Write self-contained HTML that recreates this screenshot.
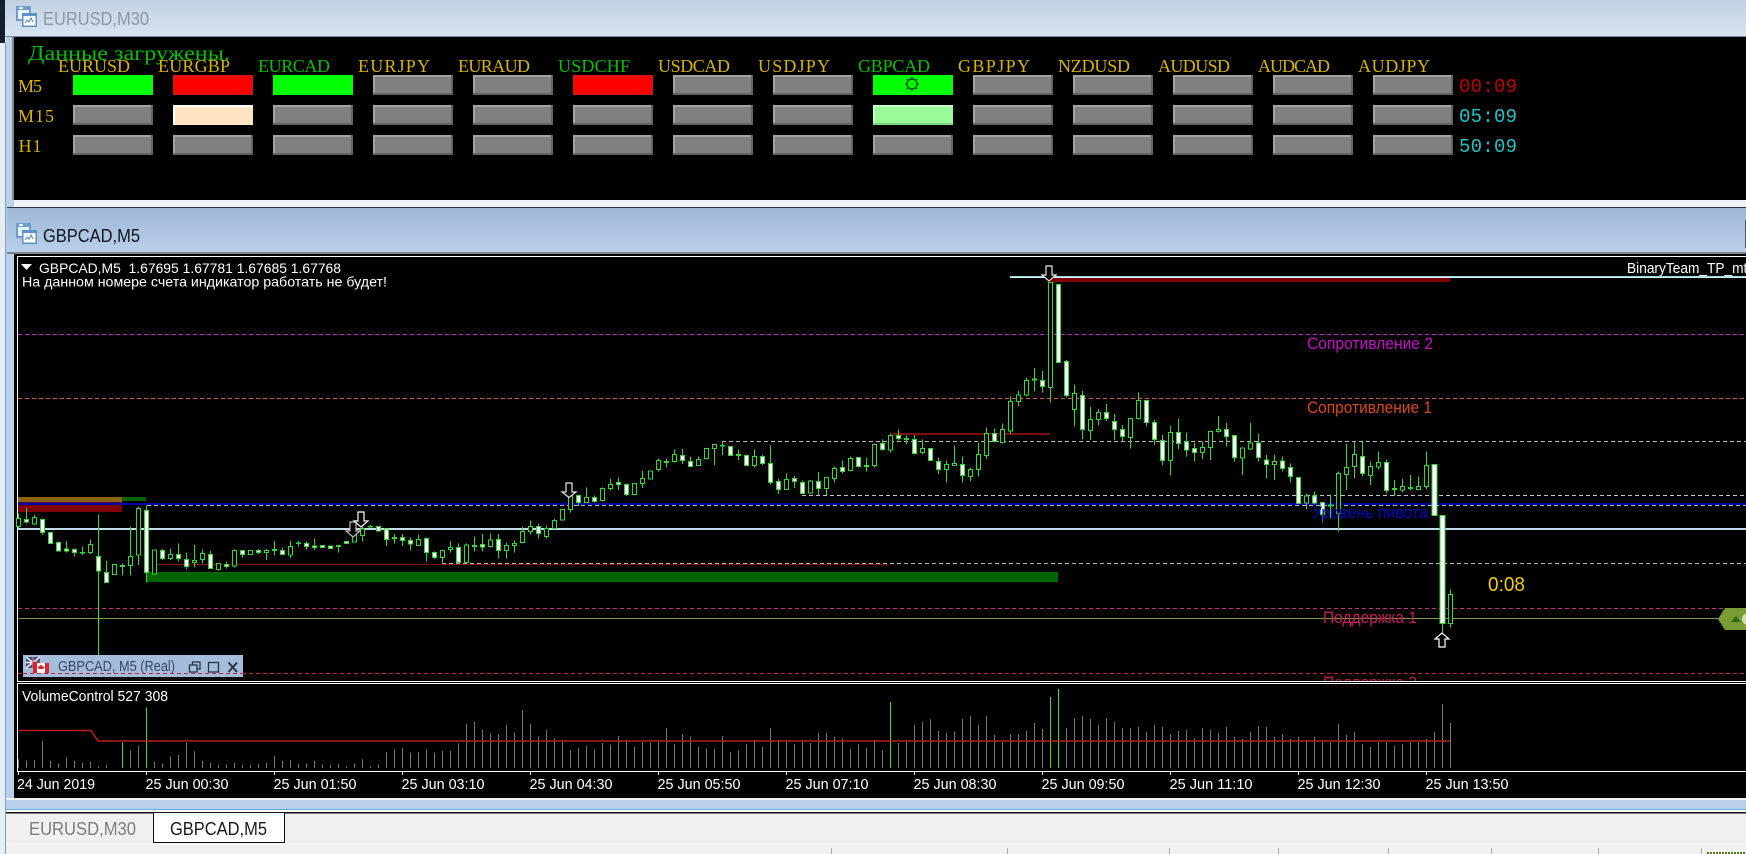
<!DOCTYPE html>
<html lang="ru"><head><meta charset="utf-8"><title>GBPCAD,M5</title>
<style>
html,body{margin:0;padding:0;width:1746px;height:854px;overflow:hidden;background:#f0f0f0}
svg{display:block}
.m{font-family:"Liberation Serif","Liberation Mono",serif;font-size:18px}
.s{font-family:"Liberation Sans",sans-serif}
.c{vector-effect:non-scaling-stroke}
</style></head><body>
<svg xmlns="http://www.w3.org/2000/svg" width="1746" height="854" viewBox="0 0 1746 854">
<defs>
<linearGradient id="t1" x1="0" y1="0" x2="0" y2="1"><stop offset="0" stop-color="#c1d0e0"/><stop offset="1" stop-color="#d6e4f1"/></linearGradient>
<linearGradient id="t2" x1="0" y1="0" x2="0" y2="1"><stop offset="0" stop-color="#9db7d6"/><stop offset="1" stop-color="#b9cfe9"/></linearGradient>
<g id="b" shape-rendering="crispEdges"><rect width="80" height="20" fill="#808080"/><rect width="80" height="2" fill="#a2a2a2"/><rect width="2" height="20" fill="#a2a2a2"/><rect y="18" width="80" height="2" fill="#626262"/><rect x="78" width="2" height="20" fill="#626262"/></g>
<g id="wi"><rect x="0" y="0" width="15" height="15" fill="#6d9ccb"/><rect x="2" y="4" width="11" height="9" fill="#eaf3fb"/><rect x="3" y="1" width="4" height="2" fill="#e8f2fb"/><rect x="6" y="7" width="15" height="14" fill="#5b93c9"/><rect x="7.500" y="10" width="12" height="9.500" fill="#fff"/><path d="M9 17l2-3 2 2 2-4 2 4" fill="none" stroke="#5a86b0" stroke-width="1"/></g>
</defs>

<!-- outer -->
<rect width="1746" height="854" fill="#f0f0f0"/>
<rect x="0" y="43" width="5" height="811" fill="#e6edf3"/>
<rect x="0" y="0" width="5" height="43" fill="#12202e"/>
<rect x="5" y="43" width="1" height="811" fill="#7d9fc4"/>
<rect x="6" y="0" width="10" height="812" fill="#bad1ea"/>
<rect x="5" y="0" width="1741" height="36" fill="url(#t1)"/>
<rect x="5" y="36" width="1741" height="1" fill="#7e8994"/>

<!-- top panel -->
<rect x="14" y="37" width="1732" height="163" fill="#000"/>
<rect x="12" y="37" width="2" height="163" fill="#7f8a95"/>
<rect x="14" y="200" width="1732" height="7" fill="#eef3f8"/>
<rect x="7" y="207" width="1739" height="1" fill="#2c3440"/>
<rect x="7" y="208" width="1739" height="44" fill="url(#t2)"/>
<rect x="7" y="252" width="1739" height="2" fill="#77838f"/>
<rect x="1745" y="220" width="1" height="28" fill="#555"/>

<use href="#wi" x="16" y="6"/>
<use href="#wi" x="16" y="223"/>
<text x="43" y="25" class="s" font-size="18" fill="#8a96a4" textLength="106" lengthAdjust="spacingAndGlyphs">EURUSD,M30</text>
<text x="43" y="242" class="s" font-size="18" fill="#10141c" textLength="97" lengthAdjust="spacingAndGlyphs">GBPCAD,M5</text>

<text x="28" y="60" class="m" fill="#00c000" style="font-size:21px" textLength="202" lengthAdjust="spacingAndGlyphs">Данные загружены.</text>
<g class="m" fill="#d8b400">
<text x="58" y="72" textLength="72">EURUSD</text><text x="158" y="72" textLength="72">EURGBP</text><text x="258" y="72" fill="#00c000" textLength="72">EURCAD</text><text x="358" y="72" textLength="72">EURJPY</text><text x="458" y="72" textLength="72">EURAUD</text><text x="558" y="72" fill="#00c000" textLength="72">USDCHF</text><text x="658" y="72" textLength="72">USDCAD</text><text x="758" y="72" textLength="72">USDJPY</text><text x="858" y="72" fill="#00c000" textLength="72">GBPCAD</text><text x="958" y="72" textLength="72">GBPJPY</text><text x="1058" y="72" textLength="72">NZDUSD</text><text x="1158" y="72" textLength="72">AUDUSD</text><text x="1258" y="72" textLength="72">AUDCAD</text><text x="1358" y="72" textLength="72">AUDJPY</text>
<text x="18" y="92" textLength="24">M5</text><text x="18" y="122" textLength="36">M15</text><text x="18.500" y="152" textLength="23">H1</text>
</g>
<!-- buttons -->
<g shape-rendering="crispEdges">
<rect x="73" y="75" width="80" height="20" fill="#00ff00"/>
<rect x="173" y="75" width="80" height="20" fill="#ff0000"/><path d="M173 75h80v1.500h-80zM173 93.500h80V95h-80zM173 75h1.500v20H173zM251.500 75h1.500v20h-1.500z" fill="#cc1a1a"/>
<rect x="273" y="75" width="80" height="20" fill="#00ff00"/>
<rect x="573" y="75" width="80" height="20" fill="#ff0000"/><path d="M573 75h80v1.500h-80zM573 93.500h80V95h-80zM573 75h1.500v20H573zM651.500 75h1.500v20h-1.500z" fill="#cc1a1a"/>
<rect x="873" y="75" width="80" height="20" fill="#00ff00"/>
<rect x="173" y="105" width="80" height="20" fill="#ffe4c4"/><path d="M173 105h80v2h-80zM173 105h2v20h-2z" fill="#fff"/>
<rect x="873" y="105" width="80" height="20" fill="#98fb98"/><path d="M873 105h80v2h-80zM873 105h2v20h-2z" fill="#c6fdc6"/><path d="M873 123h80v2h-80z" fill="#7ad47a"/>
</g>
<g>
<use href="#b" x="373" y="75"/><use href="#b" x="473" y="75"/><use href="#b" x="673" y="75"/><use href="#b" x="773" y="75"/><use href="#b" x="973" y="75"/><use href="#b" x="1073" y="75"/><use href="#b" x="1173" y="75"/><use href="#b" x="1273" y="75"/><use href="#b" x="1373" y="75"/>
<use href="#b" x="73" y="105"/><use href="#b" x="273" y="105"/><use href="#b" x="373" y="105"/><use href="#b" x="473" y="105"/><use href="#b" x="573" y="105"/><use href="#b" x="673" y="105"/><use href="#b" x="773" y="105"/><use href="#b" x="973" y="105"/><use href="#b" x="1073" y="105"/><use href="#b" x="1173" y="105"/><use href="#b" x="1273" y="105"/><use href="#b" x="1373" y="105"/>
<use href="#b" x="73" y="135"/><use href="#b" x="173" y="135"/><use href="#b" x="273" y="135"/><use href="#b" x="373" y="135"/><use href="#b" x="473" y="135"/><use href="#b" x="573" y="135"/><use href="#b" x="673" y="135"/><use href="#b" x="773" y="135"/><use href="#b" x="873" y="135"/><use href="#b" x="973" y="135"/><use href="#b" x="1073" y="135"/><use href="#b" x="1173" y="135"/><use href="#b" x="1273" y="135"/><use href="#b" x="1373" y="135"/>
</g>
<g fill="none" stroke="#053d05" stroke-width="1.300"><circle cx="912" cy="84" r="5"/><path d="M912 77v2M912 89v2M905 84h2M917 84h2M907 79l1.500 1.500M917 79l-1.500 1.500M907 89l1.500-1.500M917 89l-1.500-1.500"/></g>
<g font-family="'Liberation Mono',monospace" font-size="19">
<text x="1459" y="92" fill="#c00000" textLength="58">00:09</text>
<text x="1459" y="122" fill="#1fc4c4" textLength="58">05:09</text>
<text x="1459" y="152" fill="#1fc4c4" textLength="58">50:09</text>
</g>

<!-- chart frame -->
<rect x="14" y="254" width="1732" height="544" fill="#000"/>
<rect x="17" y="256" width="1729" height="1" fill="#fff"/>
<rect x="17" y="256" width="1" height="515" fill="#fff"/>

<!-- level lines -->
<g fill="none" shape-rendering="crispEdges" stroke-width="1">
<path d="M18 334.500H1746" stroke="#b82cb8" stroke-dasharray="4 3"/>
<path d="M18 398.500H1746" stroke="#cc6030" stroke-dasharray="4 3"/>
<path d="M722 441.500H1746" stroke="#b8b8b8" stroke-dasharray="4 3"/>
<path d="M802 495.500H1746" stroke="#c4c4c4" stroke-dasharray="4 3"/>
<path d="M147 505.500H1746" stroke="#b8b8b8" stroke-dasharray="4 3"/>
<path d="M442 563.500H1746" stroke="#b8b8b8" stroke-dasharray="4 3"/>
<path d="M18 608.500H1746" stroke="#c03088" stroke-dasharray="4 3"/>
<path d="M18 618.500H1746" stroke="#7c9c44"/>
<path d="M18 673.500H1746" stroke="#c02448" stroke-dasharray="4 3"/>
<path d="M157 564.500H888" stroke="#801414"/>
</g>
<g shape-rendering="crispEdges">
<rect x="18" y="497" width="104" height="5" fill="#8a6410"/>
<rect x="122" y="497" width="24" height="4" fill="#006400"/>
<rect x="18" y="505" width="104" height="7" fill="#800000"/>
<rect x="18" y="502" width="104" height="3" fill="#4a0a50"/>
<rect x="18" y="503" width="1728" height="2" fill="#0000a0"/>
<rect x="18" y="528" width="1728" height="2" fill="#bfdce8"/>
<rect x="147" y="572" width="911" height="10" fill="#006400"/>
<rect x="1010" y="276" width="736" height="1" fill="#8fdfe0"/>
<rect x="1010" y="277" width="736" height="1" fill="#dcecf2"/>
<rect x="1051" y="278" width="399" height="4" fill="#800000"/>
<rect x="893" y="433" width="157" height="2" fill="#7a1010"/>
</g>
<text x="1627" y="273" class="s" font-size="14.500" fill="#fff" textLength="128" lengthAdjust="spacingAndGlyphs">BinaryTeam_TP_mt4</text>

<!-- candles 18..474 -->
<g transform="translate(0 480) scale(1 .33333)" stroke="#33d833" stroke-width="1" shape-rendering="crispEdges">
<path class="c" fill="none" d="M18.500 100V145M26.500 82V130M34.500 105V135M42.500 115V165M58.500 185V215M66.500 183V218M74.500 205V230M82.500 200V225M90.500 178V222M98.500 103V525M106.500 243V307M122.500 250V287M130.500 140V287M138.500 80V255M146.500 77V307M154.500 210V285M162.500 207V240M170.500 205V240M178.500 190V245M186.500 217V267M194.500 195V263M202.500 208V250M210.500 213V265M218.500 250V272M226.500 245V265M234.500 208V263M242.500 210V233M258.500 207V222M266.500 207V240M274.500 183V227M282.500 202V225M290.500 183V234M298.500 183V200M306.500 185V208M314.500 175V210M338.500 197V218M354.500 160V188M362.500 140V185M370.500 135V143M386.500 147V198M394.500 162V190M402.500 162V198M410.500 172V212M418.500 165V198M426.500 172V243M434.500 215V237M442.500 210V250M450.500 183V218M458.500 190V250M466.500 190V250M474.500 170V215"/>
<path class="c" fill="#000" d="M16.500 115h4V140h-4zM32.500 112h4V132h-4zM88.500 193h4V218h-4zM112.500 253h4V283h-4zM120.500 257h4V260h-4zM128.500 229h4V256h-4zM136.500 85h4V225h-4zM152.500 210h4V282h-4zM168.500 224h4V236h-4zM192.500 241h4V247h-4zM200.500 220h4V239h-4zM216.500 250h4V268h-4zM232.500 211h4V258h-4zM248.500 211h4V224h-4zM264.500 211h4V218h-4zM288.500 200h4V225h-4zM352.500 165h4V186h-4zM360.500 147h4V167h-4zM416.500 178h4V196h-4zM440.500 212h4V233h-4zM448.500 202h4V208h-4zM464.500 195h4V247h-4z"/>
<path class="c" fill="#fff" d="M24.500 118h4V126h-4zM40.500 118h4V157h-4zM48.500 157h4V190h-4zM56.500 187h4V213h-4zM64.500 207h4V213h-4zM72.500 209h4V218h-4zM80.500 217h4V219h-4zM96.500 229h4V273h-4zM104.500 277h4V307h-4zM144.500 91h4V277h-4zM160.500 212h4V235h-4zM176.500 224h4V235h-4zM184.500 238h4V260h-4zM208.500 224h4V265h-4zM224.500 253h4V260h-4zM240.500 212h4V223h-4zM256.500 211h4V217h-4zM272.500 209h4V212h-4zM280.500 211h4V223h-4zM296.500 189h4V190h-4zM304.500 191h4V200h-4zM312.500 198h4V202h-4zM320.500 196h4V202h-4zM328.500 198h4V206h-4zM336.500 197h4V199h-4zM344.500 184h4V190h-4zM368.500 139h4V141h-4zM376.500 139h4V153h-4zM384.500 147h4V178h-4zM392.500 172h4V175h-4zM400.500 172h4V182h-4zM408.500 181h4V192h-4zM424.500 175h4V217h-4zM432.500 218h4V232h-4zM456.500 203h4V248h-4zM472.500 196h4V200h-4z"/>
</g>
<!-- candles 482..994 -->
<g transform="translate(0 420) scale(1 .33333)" stroke="#33d833" stroke-width="1" shape-rendering="crispEdges">
<path class="c" fill="none" d="M482.500 342V395M490.500 340V382M498.500 342V414M506.500 367V416M514.500 362V398M522.500 320V370M530.500 302V344M538.500 310V356M546.500 316V356M554.500 295V328M570.500 228V278M578.500 225V258M586.500 202V248M594.500 226V247M602.500 202V245M610.500 175V212M618.500 172V210M626.500 190V228M634.500 190V227M642.500 153V204M658.500 115V155M666.500 115V143M674.500 88V128M682.500 87V132M690.500 110V140M698.500 110V138M706.500 85V118M714.500 72V135M722.500 65V105M738.500 88V120M746.500 103V138M754.500 88V143M762.500 104V135M770.500 76V193M778.500 176V222M786.500 160V210M794.500 168V204M802.500 181V222M810.500 180V222M818.500 156V225M826.500 172V225M834.500 140V188M842.500 122V161M850.500 110V154M858.500 112V142M866.500 114V155M874.500 70V142M882.500 58V92M890.500 40V97M898.500 28V62M906.500 46V74M914.500 45V103M922.500 58V104M938.500 112V162M946.500 122V188M954.500 76V138M962.500 110V188M970.500 142V185M978.500 68V170M986.500 22V117M994.500 26V68"/>
<path class="c" fill="#000" d="M488.500 360h4V380h-4zM504.500 376h4V392h-4zM512.500 370h4V376h-4zM520.500 334h4V368h-4zM528.500 320h4V334h-4zM544.500 326h4V350h-4zM552.500 301h4V326h-4zM560.500 268h4V300h-4zM568.500 228h4V268h-4zM584.500 232h4V247h-4zM600.500 205h4V242h-4zM608.500 193h4V206h-4zM632.500 191h4V224h-4zM640.500 176h4V190h-4zM648.500 153h4V177h-4zM656.500 121h4V149h-4zM672.500 103h4V125h-4zM696.500 118h4V137h-4zM704.500 85h4V115h-4zM712.500 73h4V86h-4zM752.500 109h4V137h-4zM784.500 178h4V209h-4zM808.500 183h4V219h-4zM824.500 172h4V205h-4zM832.500 145h4V176h-4zM848.500 115h4V152h-4zM872.500 73h4V137h-4zM888.500 46h4V90h-4zM920.500 85h4V98h-4zM944.500 134h4V148h-4zM952.500 130h4V136h-4zM968.500 148h4V170h-4zM976.500 103h4V148h-4zM984.500 40h4V107h-4z"/>
<path class="c" fill="#fff" d="M480.500 374h4V381h-4zM496.500 358h4V392h-4zM536.500 320h4V340h-4zM576.500 227h4V248h-4zM592.500 232h4V244h-4zM616.500 187h4V193h-4zM624.500 194h4V224h-4zM664.500 124h4V127h-4zM680.500 106h4V121h-4zM688.500 124h4V139h-4zM720.500 76h4V78h-4zM728.500 79h4V106h-4zM736.500 103h4V106h-4zM744.500 106h4V136h-4zM760.500 109h4V131h-4zM768.500 130h4V188h-4zM776.500 184h4V208h-4zM792.500 175h4V185h-4zM800.500 187h4V221h-4zM816.500 184h4V206h-4zM840.500 142h4V155h-4zM856.500 112h4V139h-4zM864.500 136h4V139h-4zM880.500 70h4V89h-4zM896.500 46h4V56h-4zM904.500 55h4V59h-4zM912.500 58h4V100h-4zM928.500 85h4V122h-4zM936.500 124h4V148h-4zM960.500 134h4V166h-4zM992.500 40h4V65h-4z"/>
</g>
<!-- candles 1002..1450 -->
<g transform="translate(0 260) scale(1 .33333)" stroke="#33d833" stroke-width="1" shape-rendering="crispEdges">
<path class="c" fill="none" d="M1002.500 490V550M1010.500 410V522M1018.500 393V438M1026.500 352V410M1034.500 324V395M1042.500 333V398M1050.500 66V428M1066.500 300V412M1074.500 373V500M1082.500 393V537M1090.500 440V540M1098.500 447V497M1106.500 432V483M1114.500 462V540M1122.500 495V543M1130.500 475V566M1138.500 397V478M1146.500 421V500M1154.500 478V555M1162.500 525V617M1170.500 498V647M1178.500 475V567M1186.500 518V590M1194.500 548V605M1202.500 545V597M1210.500 513V600M1218.500 468V517M1226.500 487V560M1234.500 525V605M1242.500 564V645M1250.500 487V570M1258.500 522V605M1266.500 585V655M1274.500 585V660M1282.500 590V635M1290.500 610V668M1306.500 700V748M1314.500 695V733M1322.500 728V788M1330.500 703V775M1338.500 635V815M1346.500 552V690M1354.500 545V655M1362.500 545V650M1370.500 605V675M1378.500 575V628M1386.500 598V700M1394.500 660V708M1402.500 655V698M1410.500 645V692M1418.500 650V690M1426.500 575V688M1442.500 1090V1118M1450.500 988V1103"/>
<path class="c" fill="#000" d="M1000.500 508h4V548h-4zM1008.500 424h4V513h-4zM1016.500 405h4V425h-4zM1024.500 361h4V405h-4zM1048.500 67h4V382h-4zM1072.500 400h4V449h-4zM1088.500 478h4V512h-4zM1096.500 457h4V479h-4zM1128.500 475h4V533h-4zM1136.500 421h4V475h-4zM1168.500 517h4V602h-4zM1200.500 562h4V578h-4zM1208.500 514h4V563h-4zM1216.500 508h4V515h-4zM1240.500 564h4V594h-4zM1248.500 549h4V567h-4zM1272.500 604h4V613h-4zM1304.500 708h4V729h-4zM1336.500 640h4V760h-4zM1344.500 622h4V644h-4zM1352.500 583h4V620h-4zM1368.500 620h4V647h-4zM1376.500 607h4V621h-4zM1400.500 680h4V690h-4zM1416.500 680h4V689h-4zM1424.500 617h4V680h-4zM1448.500 1003h4V1090h-4z"/>
<path class="c" fill="#fff" d="M1032.500 357h4V360h-4zM1040.500 361h4V380h-4zM1056.500 73h4V308h-4zM1064.500 304h4V407h-4zM1080.500 406h4V508h-4zM1104.500 457h4V475h-4zM1112.500 484h4V508h-4zM1120.500 508h4V530h-4zM1144.500 422h4V488h-4zM1152.500 487h4V539h-4zM1160.500 541h4V602h-4zM1176.500 517h4V551h-4zM1184.500 545h4V570h-4zM1192.500 565h4V577h-4zM1224.500 508h4V530h-4zM1232.500 526h4V592h-4zM1256.500 549h4V592h-4zM1264.500 600h4V614h-4zM1280.500 603h4V626h-4zM1288.500 622h4V650h-4zM1296.500 653h4V730h-4zM1312.500 708h4V729h-4zM1320.500 728h4V764h-4zM1328.500 735h4V738h-4zM1360.500 589h4V640h-4zM1384.500 607h4V692h-4zM1392.500 686h4V688h-4zM1408.500 682h4V686h-4zM1432 613h5V767h-5zM1440 767h5V1090h-5z"/>
</g>

<!-- arrows -->
<g fill="#000" stroke="#fff" stroke-width="1.200">
<path d="M350 522h6v9h4l-7 6-7-6h4z" stroke="#bcbcbc"/>
<path d="M358 512h6v9h4l-7 6-7-6h4z"/>
<path d="M566 483h6v9h4l-7 5.500-7-5.500h4z" stroke="#e8e8e8"/>
<path d="M1046 266h6v9h4l-7 6-7-6h4z" stroke="#e6e6e6"/>
<path d="M1439 647h6v-8h4l-7-6-7 6h4z"/>
</g>

<!-- labels -->
<g class="s" font-size="17">
<text x="1307" y="349" fill="#c410c4" textLength="126" lengthAdjust="spacingAndGlyphs">Сопротивление 2</text>
<text x="1307" y="413" fill="#d84a14" textLength="125" lengthAdjust="spacingAndGlyphs">Сопротивление 1</text>
<text x="1312" y="518" fill="#0000c4" textLength="116" lengthAdjust="spacingAndGlyphs">Уровень пивота</text>
<text x="1323" y="623" fill="#c81a60" textLength="94" lengthAdjust="spacingAndGlyphs">Поддержка 1</text>
<text x="1323" y="688" fill="#c81a40" textLength="94" lengthAdjust="spacingAndGlyphs">Поддержка 2</text>
</g>
<text x="1488" y="591" class="s" font-size="20" fill="#f0c800" textLength="37" lengthAdjust="spacingAndGlyphs">0:08</text>

<!-- right price tag -->
<path d="M1718 619l7-11h21v22h-21z" fill="#7a9c34"/>
<path d="M1731 622l5-6 5 6z" fill="#2f6a10"/>
<circle cx="1748" cy="619" r="6" fill="#cfe0b0"/>

<!-- header text -->
<path d="M21 264h11l-5.500 6z" fill="#fff"/>
<text x="39" y="273" class="s" font-size="14" fill="#fff" xml:space="preserve" textLength="302" lengthAdjust="spacingAndGlyphs">GBPCAD,M5  1.67695 1.67781 1.67685 1.67768</text>
<text x="22" y="286.500" class="s" font-size="14" fill="#fff" textLength="365" lengthAdjust="spacingAndGlyphs">На данном номере счета индикатор работать не будет!</text>

<!-- minimized window -->
<rect x="23" y="655" width="220" height="22" fill="#a3bddb"/>
<g>
<rect x="26" y="657" width="14" height="11" fill="#3d4f86"/>
<path d="M26 657l14 11M40 657l-14 11M33 657v11M26 662.500h14" stroke="#f0f0f4" stroke-width="1.500"/>
<path d="M33 662.500h7M33 657v11" stroke="#c8202c" stroke-width="1"/>
<rect x="33" y="663" width="16" height="10" fill="#fff"/>
<rect x="33" y="663" width="4" height="10" fill="#d8242c"/>
<rect x="45" y="663" width="4" height="10" fill="#d8242c"/>
<path d="M41 664.500l1.500 2 1.500-.5-.5 3h-5l-.5-3 1.500.5z" fill="#d8242c"/>
</g>
<text x="58" y="671" class="s" font-size="15" fill="#3a4866" textLength="117" lengthAdjust="spacingAndGlyphs">GBPCAD, M5 (Real)</text>
<g fill="none" stroke="#2a3446" stroke-width="1.300">
<path d="M192.500 665v-3h7.500v7h-3M189.500 665h7.500v7h-7.500z"/>
<rect x="208.500" y="662.500" width="10" height="9.500"/>
<path d="M228.500 662.500l8.500 9.500M237 662.500l-8.500 9.500" stroke-width="2"/>
</g>
<path d="M23 673.500H243" stroke="#c02448" stroke-dasharray="4 3" fill="none" shape-rendering="crispEdges"/>

<!-- subwindow -->
<rect x="17" y="681" width="1729" height="3" fill="#000"/>
<rect x="17" y="681" width="1729" height="1" fill="#fff"/>
<rect x="17" y="683" width="1729" height="1" fill="#fff"/>
<rect x="18" y="684" width="1728" height="87" fill="#000"/>
<rect x="17" y="683" width="1" height="88" fill="#fff"/>
<text x="22" y="701" class="s" font-size="15" fill="#fff" textLength="146" lengthAdjust="spacingAndGlyphs">VolumeControl 527 308</text>

<!-- volumes -->
<g transform="translate(0 480) scale(1 .33333)" shape-rendering="crispEdges" fill="none" stroke-width="1">
<path class="c" stroke="#777" d="M18.500 838V864M26.500 842V864M34.500 840V864M42.500 783V864M50.500 843V864M58.500 850V864M66.500 833V864M74.500 843V864M82.500 848V864M90.500 845V864M98.500 860V864M106.500 855V864M130.500 812V864M138.500 798V864M154.500 845V864M162.500 850V864M170.500 830V864M178.500 825V864M186.500 788V864M194.500 815V864M202.500 843V864M210.500 848V864M218.500 855V864M226.500 853V864M234.500 847V864M242.500 855V864M250.500 855V864M258.500 852V864M266.500 847V864M274.500 828V864M282.500 843V864M290.500 840V864M298.500 852V864M306.500 850V864M314.500 843V864M322.500 853V864M330.500 855V864M338.500 852V864M346.500 860V864M354.500 850V864M362.500 838V864M370.500 860V864M378.500 853V864M386.500 816V864M394.500 808V864M402.500 804V864M410.500 818V864M418.500 816V864M426.500 808V864M434.500 818V864M442.500 813V864M450.500 813V864M458.500 790V864M466.500 732V864M474.500 724V864M482.500 748V864M490.500 760V864M498.500 762V864"/>
<path class="c" stroke="#3fd83f" d="M122.500 787V864M146.500 682V864"/>
</g>
<g transform="translate(0 540) scale(1 .33333)" shape-rendering="crispEdges" fill="none" stroke-width="1">
<path class="c" stroke="#777" d="M506.500 555V684M514.500 578V684M522.500 510V684M530.500 552V684M538.500 590V684M546.500 570V684M554.500 594V684M562.500 605V684M570.500 630V684M578.500 624V684M586.500 618V684M594.500 629V684M602.500 609V684M610.500 614V684M618.500 588V684M626.500 598V684M634.500 620V684M642.500 606V684M650.500 608V684M658.500 604V684M666.500 564V684M674.500 612V684M682.500 582V684M690.500 590V684M698.500 620V684M706.500 626V684M714.500 627V684M722.500 588V684M730.500 636V684M738.500 632V684M746.500 612V684M754.500 600V684M762.500 620V684M770.500 564V684M778.500 600V684M786.500 604V684M794.500 612V684M802.500 604V684M810.500 609V684M818.500 579V684M826.500 579V684M834.500 591V684M842.500 595V684M850.500 627V684M858.500 612V684M866.500 624V684M874.500 600V684M882.500 630V684M898.500 609V684M906.500 605V684M914.500 555V684M922.500 546V684M930.500 538V684M938.500 573V684M946.500 579V684M954.500 575V684M962.500 537V684M970.500 528V684M978.500 555V684M986.500 528V684M994.500 585V684M1002.500 606V684M1010.500 582V684M1018.500 582V684M1026.500 571V684M1034.500 549V684M1042.500 567V684M1066.500 564V684M1074.500 534V684M1082.500 528V684M1090.500 537V684M1098.500 555V684M1106.500 534V684M1114.500 546V684M1122.500 564V684M1130.500 564V684M1138.500 561V684M1146.500 576V684M1154.500 555V684M1162.500 561V684M1170.500 582V684M1178.500 573V684M1186.500 570V684M1194.500 594V684M1202.500 564V684M1210.500 570V684M1218.500 579V684M1226.500 561V684M1234.500 591V684M1242.500 597V684M1250.500 576V684M1258.500 558V684M1266.500 561V684M1274.500 591V684M1282.500 582V684M1290.500 597V684M1298.500 591V684M1306.500 600V684M1314.500 591V684M1322.500 603V684M1330.500 606V684M1338.500 552V684M1346.500 585V684M1354.500 576V684M1362.500 612V684M1370.500 621V684M1378.500 606V684M1386.500 606V684M1394.500 618V684M1402.500 612V684M1410.500 606V684M1418.500 606V684M1426.500 597V684M1434.500 576V684M1442.500 492V684M1450.500 549V684"/>
<path class="c" stroke="#3fd83f" d="M890.500 486V684M1050.500 471V684M1058.500 447V684"/>
</g>
<path d="M18 730.500H91L98 741H1450" fill="none" stroke="#b81c1c" stroke-width="1.600"/>

<!-- axis -->
<g shape-rendering="crispEdges">
<rect x="17" y="771" width="1729" height="1" fill="#fff"/>
<path d="M18.500 771v4M146.500 771v4M274.500 771v4M402.500 771v4M530.500 771v4M658.500 771v4M786.500 771v4M914.500 771v4M1042.500 771v4M1170.500 771v4M1298.500 771v4M1426.500 771v4" stroke="#fff" fill="none"/>
</g>
<g class="s" font-size="14.500" fill="#fff">
<text x="17" y="789" textLength="78" lengthAdjust="spacingAndGlyphs">24 Jun 2019</text>
<text x="145.500" y="789" textLength="83" lengthAdjust="spacingAndGlyphs">25 Jun 00:30</text>
<text x="273.500" y="789" textLength="83" lengthAdjust="spacingAndGlyphs">25 Jun 01:50</text>
<text x="401.500" y="789" textLength="83" lengthAdjust="spacingAndGlyphs">25 Jun 03:10</text>
<text x="529.500" y="789" textLength="83" lengthAdjust="spacingAndGlyphs">25 Jun 04:30</text>
<text x="657.500" y="789" textLength="83" lengthAdjust="spacingAndGlyphs">25 Jun 05:50</text>
<text x="785.500" y="789" textLength="83" lengthAdjust="spacingAndGlyphs">25 Jun 07:10</text>
<text x="913.500" y="789" textLength="83" lengthAdjust="spacingAndGlyphs">25 Jun 08:30</text>
<text x="1041.500" y="789" textLength="83" lengthAdjust="spacingAndGlyphs">25 Jun 09:50</text>
<text x="1169.500" y="789" textLength="83" lengthAdjust="spacingAndGlyphs">25 Jun 11:10</text>
<text x="1297.500" y="789" textLength="83" lengthAdjust="spacingAndGlyphs">25 Jun 12:30</text>
<text x="1425.500" y="789" textLength="83" lengthAdjust="spacingAndGlyphs">25 Jun 13:50</text>
</g>

<!-- bottom -->
<g shape-rendering="crispEdges">
<rect x="6" y="798" width="1740" height="2" fill="#eef3f8"/>
<rect x="6" y="800" width="1740" height="9" fill="#b8d0ea"/>
<rect x="6" y="809" width="1740" height="1" fill="#5cb0d8"/>
<rect x="6" y="810" width="1740" height="2" fill="#fff"/>
<rect x="6" y="812" width="1740" height="1.500" fill="#111"/>
<rect x="6" y="814" width="1740" height="30" fill="#f0f0f0"/>
<rect x="153" y="813" width="132" height="30" fill="#111"/>
<rect x="154" y="813" width="130" height="29" fill="#fff"/>
<rect x="6" y="844" width="1740" height="1" fill="#fbfbfb"/>
<rect x="6" y="845" width="1740" height="9" fill="#f0f0f0"/>
<path d="M831.500 848V854M1007.500 848V854M1169.500 848V854M1278.500 848V854M1388.500 848V854M1491.500 848V854M1598.500 848V854M1701.500 848V854" stroke="#a8a8a8" fill="none"/>
<path d="M1707 853H1746" stroke="#5a7a20" stroke-width="2" stroke-dasharray="2 1" fill="none"/>
</g>
<text x="29" y="835" class="s" font-size="18" fill="#7c7c7c" textLength="107" lengthAdjust="spacingAndGlyphs">EURUSD,M30</text>
<text x="170" y="835" class="s" font-size="18" fill="#1a1a1a" textLength="97" lengthAdjust="spacingAndGlyphs">GBPCAD,M5</text>
</svg>
</body></html>
